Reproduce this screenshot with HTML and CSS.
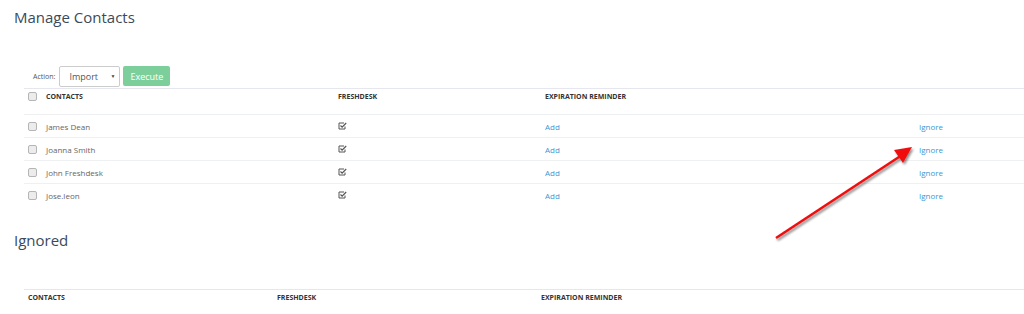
FILE: index.html
```html
<!DOCTYPE html>
<html>
<head>
	<title>Manage Contacts</title>
	<link rel="stylesheet" href="styles.css">
</head>
<body>
	<div class="page">
		<h1 class="title">Manage Contacts</h1>

		<div class="actions">
			<span class="action-label">Action:</span>
			<div class="select"><span>Import</span><span class="caret">&#9660;</span></div>
			<button type="button" class="execute">Execute</button>
		</div>

		<div class="grid contacts">
			<div class="row head">
				<div><span class="box"></span></div>
				<div>CONTACTS</div>
				<div>FRESHDESK</div>
				<div>EXPIRATION REMINDER</div>
				<div></div>
			</div>
			<div class="row">
				<div><span class="box"></span></div>
				<div class="name">James Dean</div>
				<div><svg class="tick" width="9" height="8" viewBox="0 0 9 8"><path d="M6 1H1v6h6V4.5" fill="none" stroke="#555" stroke-width="1"/><path d="M2.5 3.5l1.6 1.6L8.2 1" fill="none" stroke="#555" stroke-width="1.2"/></svg></div>
				<div><a href="#">Add</a></div>
				<div><a href="#">Ignore</a></div>
			</div>
			<div class="row">
				<div><span class="box"></span></div>
				<div class="name">Joanna Smith</div>
				<div><svg class="tick" width="9" height="8" viewBox="0 0 9 8"><path d="M6 1H1v6h6V4.5" fill="none" stroke="#555" stroke-width="1"/><path d="M2.5 3.5l1.6 1.6L8.2 1" fill="none" stroke="#555" stroke-width="1.2"/></svg></div>
				<div><a href="#">Add</a></div>
				<div><a href="#">Ignore</a></div>
			</div>
			<div class="row">
				<div><span class="box"></span></div>
				<div class="name">John Freshdesk</div>
				<div><svg class="tick" width="9" height="8" viewBox="0 0 9 8"><path d="M6 1H1v6h6V4.5" fill="none" stroke="#555" stroke-width="1"/><path d="M2.5 3.5l1.6 1.6L8.2 1" fill="none" stroke="#555" stroke-width="1.2"/></svg></div>
				<div><a href="#">Add</a></div>
				<div><a href="#">Ignore</a></div>
			</div>
			<div class="row last">
				<div><span class="box"></span></div>
				<div class="name">Jose.leon</div>
				<div><svg class="tick" width="9" height="8" viewBox="0 0 9 8"><path d="M6 1H1v6h6V4.5" fill="none" stroke="#555" stroke-width="1"/><path d="M2.5 3.5l1.6 1.6L8.2 1" fill="none" stroke="#555" stroke-width="1.2"/></svg></div>
				<div><a href="#">Add</a></div>
				<div><a href="#">Ignore</a></div>
			</div>
		</div>

		<h2 class="title sub">Ignored</h2>

		<div class="grid ignored">
			<div class="row head">
				<div>CONTACTS</div>
				<div>FRESHDESK</div>
				<div>EXPIRATION REMINDER</div>
			</div>
		</div>
	</div>

	<svg class="arrow" width="160" height="110" viewBox="0 0 160 110">
		<defs>
			<filter id="shadow" x="-20%" y="-20%" width="140%" height="140%">
				<feDropShadow dx="1.5" dy="2" stdDeviation="1.2" flood-color="#000" flood-opacity="0.45"/>
			</filter>
		</defs>
		<g filter="url(#shadow)">
			<line x1="6" y1="98" x2="132" y2="15" stroke="#f01010" stroke-width="2.6"/>
			<polygon points="142,7 124,10 133,23" fill="#f01010"/>
		</g>
	</svg>
</body>
</html>
```

FILE: styles.css
```css
body {
	margin: 0;
	font-family: 'Open Sans', sans-serif;
	color: #333;
	background: #fff;
}
.page {
	padding-left: 14px;
}
.title {
	margin: 0;
	padding-top: 7px;
	font-size: 15px;
	font-weight: 400;
	line-height: 20px;
	color: #3b4a5a;
}
.sub {
	padding-top: 24px;
}
.actions {
	display: flex;
	align-items: center;
	margin-top: 38px;
	margin-left: 19px;
	height: 22px;
}
.action-label {
	font-size: 7px;
	color: #555;
	margin-right: 4px;
}
.select {
	display: flex;
	align-items: center;
	justify-content: space-between;
	box-sizing: border-box;
	width: 61px;
	height: 21px;
	padding: 0 4px 0 9px;
	border: 1px solid #ccc;
	border-radius: 2px;
	font-size: 9px;
	color: #555;
}
.caret {
	font-size: 5px;
	color: #444;
}
.execute {
	margin-left: 3px;
	height: 20px;
	width: 47px;
	padding: 0;
	border: none;
	border-radius: 2px;
	background: #7ccf9b;
	color: #fff;
	font-family: 'Open Sans', sans-serif;
	font-size: 9px;
}
.grid {
	margin-left: 10px;
	width: 1000px;
	border-top: 1px solid #e6e6ee;
}
.contacts {
	margin-top: 1px;
}
.contacts .row {
	display: grid;
	grid-template-columns: 22px 292px 207px 374px 105px;
}
.ignored {
	margin-top: 39px;
}
.ignored .row {
	display: grid;
	grid-template-columns: 249px 264px 487px;
	padding-left: 4px;
}
.row {
	height: 22px;
	align-items: center;
	font-size: 8px;
	border-bottom: 1px solid #eef0f2;
}
.row.head {
	height: 26px;
	align-items: start;
	padding-top: 3px;
	box-sizing: border-box;
	font-size: 7px;
	font-weight: 700;
	color: #333;
	line-height: 9px;
}
.row.last,
.ignored .row.head {
	border-bottom: none;
}
.box {
	display: block;
	box-sizing: border-box;
	width: 9px;
	height: 9px;
	margin-left: 4px;
	border: 1px solid #b5b5b5;
	border-radius: 2px;
	background: #ececec;
}
.name {
	color: #666;
}
.tick {
	display: block;
}
a {
	color: #3a97d4;
	text-decoration: none;
}
.arrow {
	position: absolute;
	left: 770px;
	top: 140px;
}
```
